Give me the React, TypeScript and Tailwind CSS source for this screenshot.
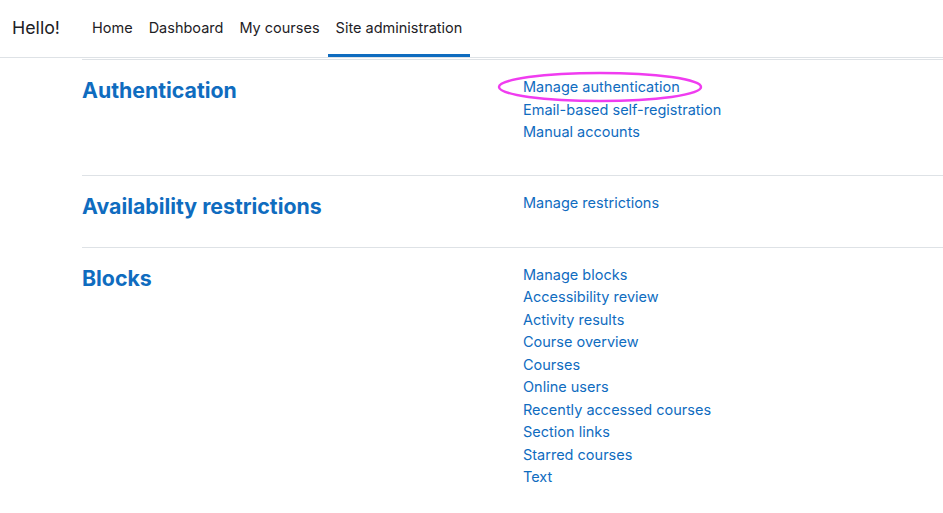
const NAV = ['Home', 'Dashboard', 'My courses', 'Site administration'];

const SECTIONS: { title: string; links: string[] }[] = [
  { title: 'Authentication', links: ['Manage authentication', 'Email-based self-registration', 'Manual accounts'] },
  { title: 'Availability restrictions', links: ['Manage restrictions'] },
  {
    title: 'Blocks',
    links: [
      'Manage blocks', 'Accessibility review', 'Activity results', 'Course overview', 'Courses',
      'Online users', 'Recently accessed courses', 'Section links', 'Starred courses', 'Text',
    ],
  },
];

export default function App() {
  return (
    <div className="h-[513px] w-[943px] overflow-hidden bg-white font-['Inter',sans-serif] text-[14.5px] text-[#1d2125]">
      <header className="flex h-[58px] items-stretch border-b border-[#dee2e6] pl-3">
        <div className="flex items-center text-[17.8px]">Hello!</div>
        <nav className="ml-6 flex items-stretch">
          {NAV.map((n) => (
            <div
              key={n}
              className={`flex items-center border-b-[3px] px-2 pt-[1px] ${n === 'Site administration' ? 'border-[#0f6cbf]' : 'border-transparent'}`}
            >
              {n}
            </div>
          ))}
        </nav>
      </header>

      <main className="pl-[82px]">
        {SECTIONS.map((s, i) => (
          <section key={s.title} className={`relative flex border-t border-[#dee2e6] pt-4 pb-[31px] ${i === 0 ? 'mt-px' : ''}`}>
            <h3 className="w-[441px] pt-[4px] text-[21.3px] leading-[20px] font-bold text-[#0f6cbf]">{s.title}</h3>
            <ul className="leading-[22.5px] text-[#0f6cbf]">
              {s.links.map((l) => (
                <li key={l}>{l}</li>
              ))}
            </ul>
            {i === 0 && (
              <svg className="absolute top-[10px] left-[414px] h-[34px] w-[208px]" viewBox="0 0 208 34">
                <ellipse cx="104" cy="17" rx="101" ry="14" fill="none" stroke="#f03cf0" strokeWidth="2.5" />
              </svg>
            )}
          </section>
        ))}
      </main>
    </div>
  );
}
